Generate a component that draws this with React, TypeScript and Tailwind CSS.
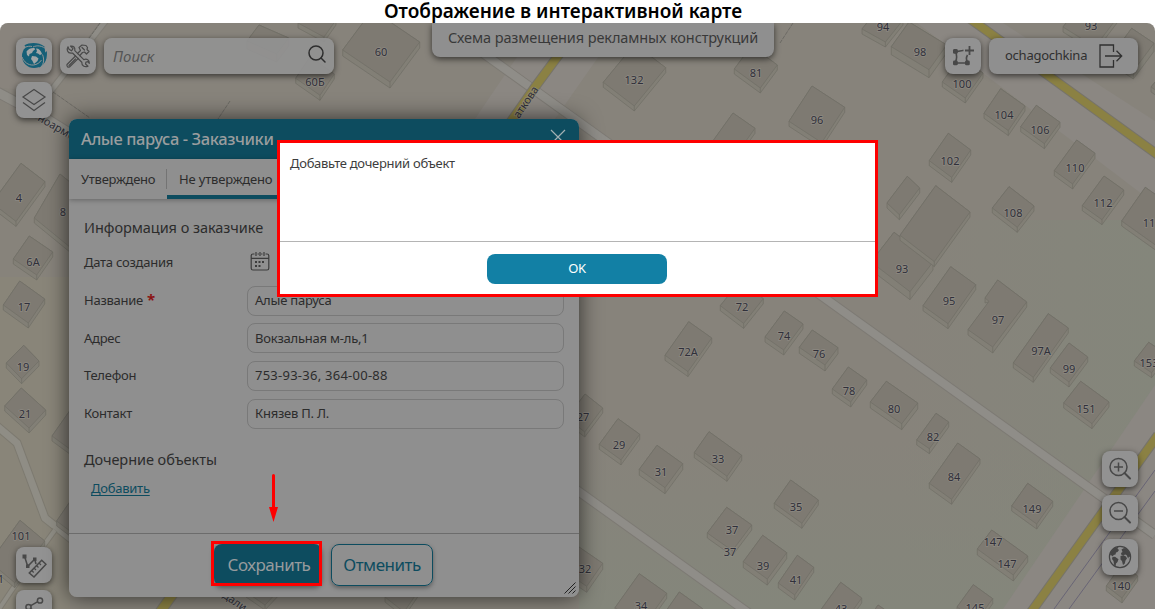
import type { ReactNode } from 'react'

type Point = [number, number]

interface Building {
  // left, top and right corner of the roof
  l: Point
  t: Point
  r: Point
  h?: number
}

interface MapLabel {
  x: number
  y: number
  text: string
}

const buildings: Building[] = [
  { l: [862, 29], t: [879.6, 7], r: [903, 20] },
  { l: [891.3, 46.7], t: [909, 22], r: [946.7, 45], h: 8 },
  { l: [942.3, 82], t: [960, 57], r: [983, 73] },
  { l: [984, 113.3], t: [1000.7, 88.7], r: [1025, 106] },
  { l: [1020.7, 126.7], t: [1036.3, 105.3], r: [1060, 122.3] },
  { l: [929.3, 160.7], t: [948.3, 133.3], r: [970.7, 150] },
  { l: [1054.3, 170.7], t: [1076.7, 140], r: [1095, 153.3] },
  { l: [1082.3, 205.7], t: [1104, 176], r: [1123.7, 190] },
  { l: [789, 121.3], t: [812, 86], r: [844.7, 107.3] },
  { l: [887, 203], t: [907.3, 176.3], r: [919.7, 188] },
  { l: [871, 262], t: [894, 232.3], r: [933, 262], h: 8 },
  { l: [900, 235.3], t: [935.7, 185.7], r: [970, 212] },
  { l: [992.3, 208], t: [1009, 186.7], r: [1034, 206] },
  { l: [1121.7, 221], t: [1145.3, 187.3], r: [1180, 212] },
  { l: [923, 305.7], t: [950.7, 266.7], r: [975.7, 284.7] },
  { l: [1013.3, 363], t: [1048.3, 313.7], r: [1068.3, 328] },
  { l: [1050.3, 368], t: [1069, 343], r: [1087.7, 357] },
  { l: [1134.3, 361], t: [1148.7, 342.3], r: [1166, 354] },
  { l: [1063.7, 403], t: [1080.7, 381.3], r: [1109, 402] },
  { l: [765, 337], t: [784.3, 311], r: [803, 324] },
  { l: [799.3, 347.3], t: [812.3, 330], r: [838, 347.7], h: 6 },
  { l: [832.3, 389], t: [848.3, 367], r: [866.7, 380] },
  { l: [870.3, 402], t: [886.3, 381.3], r: [917.7, 403], h: 6 },
  { l: [916.7, 440], t: [936, 413.3], r: [948.7, 422] },
  { l: [929.3, 483.3], t: [957.7, 443], r: [980, 459] },
  { l: [774.3, 503.3], t: [790.7, 480], r: [818.3, 500] },
  { l: [1011.7, 506], t: [1027.7, 483.3], r: [1052.7, 501.3] },
  { l: [977.3, 549], t: [991.7, 530], r: [1027.7, 556], h: 6 },
  { l: [957, 607], t: [973.3, 584.7], r: [992.7, 598.7] },
  { l: [820, 611], t: [840.7, 582.3], r: [861.7, 598] },
  { l: [868, 620], t: [878, 605], r: [900, 620] },
  { l: [778.3, 583], t: [797.3, 555.3], r: [813.7, 567.3] },
  { l: [743.3, 561.7], t: [762.7, 535.3], r: [786.7, 552.7], h: 6 },
  { l: [707.3, 533], t: [726.7, 507.3], r: [751.7, 525] },
  { l: [615, 607.7], t: [639.3, 573.7], r: [666.7, 593.3] },
  { l: [666, 611], t: [679.3, 592], r: [703, 609] },
  { l: [563, 570], t: [579, 547], r: [602.7, 563.3], h: 6 },
  { l: [567, 418], t: [585, 394], r: [602.7, 408] },
  { l: [599.3, 444.3], t: [618, 418.7], r: [639.7, 434.3] },
  { l: [639.3, 469.3], t: [657, 445.3], r: [682.7, 463.7], h: 6 },
  { l: [694.3, 452.7], t: [709, 431.7], r: [741.7, 455.3] },
  { l: [665, 355.3], t: [688.7, 321.7], r: [711.7, 338] },
  { l: [720.3, 305.7], t: [740, 281], r: [763.3, 298.7] },
  { l: [603.3, 82.3], t: [634.7, 44], r: [665.7, 67.7] },
  { l: [734.3, 69], t: [751.3, 46], r: [777.3, 65] },
  { l: [710, 145], t: [733, 113], r: [755, 128.3] },
  { l: [342.7, 50], t: [372.4, 10], r: [419.7, 42], h: 6 },
  { l: [295.7, 78.3], t: [310, 57], r: [334.3, 74] },
  { l: [247, 41], t: [259, 25], r: [288.7, 38], h: 8 },
  { l: [298, 23], t: [310, 6], r: [336, 20] },
  { l: [-8, 203], t: [21, 163.3], r: [45, 181.7] },
  { l: [34.3, 218], t: [60, 174], r: [98, 205] },
  { l: [13.3, 259], t: [29.3, 236], r: [52.7, 252] },
  { l: [3.3, 305], t: [19.7, 281], r: [44.7, 299] },
  { l: [6.3, 363], t: [23.7, 345.3], r: [39, 361] },
  { l: [4.7, 406], t: [21.3, 388], r: [45.7, 410] },
  { l: [52, 436], t: [78, 399], r: [104, 418] },
  { l: [56.7, 521], t: [80, 487], r: [104, 505] },
  { l: [-10, 562], t: [20, 520.3], r: [44.7, 541] },
  { l: [1106.3, 586], t: [1122, 564], r: [1137.7, 576] },
  { l: [1063, 27], t: [1085, -2], r: [1117, 18] },
  { l: [1111, 56], t: [1131.7, 28.3], r: [1154, 43.3], h: 8 },
  { l: [1151, 87], t: [1165, 70], r: [1180, 80] },
  { l: [385, 597], t: [400, 575], r: [419, 590] },
  { l: [246, 592], t: [262, 575], r: [281, 588] },
]

const labels: MapLabel[] = [
  { x: 883, y: 27, text: '94' },
  { x: 920, y: 52, text: '98' },
  { x: 962, y: 84, text: '100' },
  { x: 1004, y: 115, text: '104' },
  { x: 1040, y: 130, text: '106' },
  { x: 950, y: 161, text: '102' },
  { x: 1075, y: 168, text: '110' },
  { x: 1103, y: 203, text: '112' },
  { x: 817, y: 120, text: '96' },
  { x: 902, y: 269, text: '93' },
  { x: 1013, y: 213, text: '108' },
  { x: 1149, y: 223, text: '11' },
  { x: 949, y: 301, text: '95' },
  { x: 998, y: 320, text: '97' },
  { x: 1041, y: 351, text: '97А' },
  { x: 1069, y: 369, text: '99' },
  { x: 1149, y: 363, text: '153' },
  { x: 1086, y: 409, text: '151' },
  { x: 784, y: 336, text: '74' },
  { x: 819, y: 354, text: '76' },
  { x: 849, y: 391, text: '78' },
  { x: 894, y: 409, text: '80' },
  { x: 933, y: 437, text: '82' },
  { x: 954, y: 477, text: '84' },
  { x: 796, y: 507, text: '35' },
  { x: 1032, y: 509, text: '149' },
  { x: 993, y: 542, text: '147' },
  { x: 1007, y: 564, text: '147' },
  { x: 975, y: 608, text: '145' },
  { x: 841, y: 609, text: '43' },
  { x: 796, y: 580, text: '41' },
  { x: 763, y: 566, text: '39' },
  { x: 732, y: 530, text: '37' },
  { x: 730, y: 552, text: '37' },
  { x: 641, y: 606, text: '34' },
  { x: 585, y: 569, text: '32' },
  { x: 583, y: 417, text: '27' },
  { x: 619, y: 445, text: '29' },
  { x: 661, y: 472, text: '31' },
  { x: 718, y: 459, text: '33' },
  { x: 688, y: 352, text: '72А' },
  { x: 742, y: 307, text: '72' },
  { x: 634, y: 80, text: '132' },
  { x: 756, y: 73, text: '81' },
  { x: 381, y: 52, text: '60' },
  { x: 315, y: 82, text: '60Б' },
  { x: 19, y: 198, text: '4' },
  { x: 63, y: 212, text: '8' },
  { x: 33, y: 262, text: '6А' },
  { x: 24, y: 307, text: '17' },
  { x: 23, y: 367, text: '19' },
  { x: 25, y: 414, text: '21' },
  { x: 21, y: 536, text: '101' },
  { x: 1, y: 579, text: '1' },
  { x: 1121, y: 586, text: '140' },
  { x: 1091, y: 26, text: '93' },
]

const points = (list: Point[]) => list.map((p) => p.join(',')).join(' ')

function House({ l, t, r, h = 5 }: Building) {
  const b: Point = [l[0] + r[0] - t[0], l[1] + r[1] - t[1]]
  const down = (p: Point): Point => [p[0], p[1] + h]
  return (
    <g fill="#7e7a72" stroke="#706e66" strokeWidth="0.7">
      <polygon points={points([l, t, r, down(r), down(b), down(l)])} fill="#827f76" />
      <polygon points={points([l, t, r, b])} />
      <path d={`M${b[0]} ${b[1]}v${h}`} />
    </g>
  )
}

function Road({ d, color, width, edge }: { d: string; color: string; width: number; edge: string }) {
  return (
    <g fill="none">
      <path d={d} stroke={edge} strokeWidth={width + 2} />
      <path d={d} stroke={color} strokeWidth={width} />
    </g>
  )
}

function CityMap() {
  return (
    <svg className="absolute inset-0 h-[586px] w-[1155px]" viewBox="0 23 1155 586">
      <defs>
        <linearGradient id="east" x1="0" x2="1">
          <stop offset="0" stopColor="#84867b" stopOpacity="0" />
          <stop offset="1" stopColor="#84867b" />
        </linearGradient>
        <linearGradient id="south" x1="0" x2="0" y1="0" y2="1">
          <stop offset="0" stopColor="#84867b" stopOpacity="0" />
          <stop offset="1" stopColor="#84867b" />
        </linearGradient>
      </defs>
      <rect y="23" width="1155" height="586" fill="#87837b" />
      <rect x="900" y="220" width="255" height="389" fill="url(#east)" />
      <rect x="579" y="440" width="576" height="169" fill="url(#south)" />
      <rect y="277" width="70" height="332" fill="#8a8778" opacity="0.6" />

      {/* light strips along the main streets */}
      <g fill="#8b8782">
        <polygon points="917,23 1003,23 1155,121 1155,204" />
        <polygon points="1155,385 1155,609 1003,609" />
        <polygon points="540,23 622,23 555,119 500,200 420,200" />
        <polygon points="0,23 100,23 50,92 0,88" opacity="0.35" />
      </g>

      <Road d="M441 23L1155 535" color="#8f8d88" width={8} edge="#7d7a74" />
      <Road d="M560 478L750 614" color="#8f8d88" width={8} edge="#7d7a74" />
      <Road d="M107 19L50 92" color="#8f8d87" width={5} edge="#7f7c75" />
      <Road d="M-3 92L42 116L90 146" color="#8f8d87" width={9} edge="#7d7a74" />
      <Road d="M-3 426L17 443L45 518L80 546" color="#8f8d85" width={7} edge="#7d7a70" />
      <Road d="M-3 612L20 578L55 530" color="#8f8d85" width={4} edge="#7d7a70" />
      <Road d="M586 18L535 87L505 130" color="#8b8143" width={8} edge="#76736b" />
      <Road d="M180 584L158 615" color="#8b8143" width={9} edge="#76736b" />
      <Road d="M969 18L1158 155" color="#8b8143" width={8} edge="#76736b" />
      <Road d="M1158 435L1029 615" color="#8b8143" width={8} edge="#76736b" />

      <g fill="none" strokeWidth="0.8">
        <path d="M1155 470L1054 609M1155 491L1069 609" stroke="#5f5c72" />
        <path d="M100 23L72 62M53 92L90 118M230 101L218 119M793 23L780 43" stroke="#65635e" strokeDasharray="4 1" />
      </g>

      {buildings.map((b, i) => (
        <House key={i} {...b} />
      ))}
      <g fill="#7e7a72" stroke="#706e66" strokeWidth="0.7">
        <polygon points="997.7,280 1026.7,302 1026.7,307 992.7,353 968,335 968,329.7 989,302 985,303 985,298" fill="#827f76" />
        <polygon points="997.7,280 1026.7,302 992.7,347 968,329.7 989,301.3 985,298" />
        <path d="M992.7 347v6" />
      </g>

      <g
        className="font-['Noto_Sans'] text-[11px]"
        fill="#30303a"
        stroke="#96938c"
        strokeWidth="1.6"
        strokeOpacity="0.6"
        paintOrder="stroke"
        textAnchor="middle"
      >
        {labels.map((l) => (
          <text key={`${l.text}-${l.x}`} x={l.x} y={l.y + 4}>
            {l.text}
          </text>
        ))}
        <text transform="translate(37 120) rotate(30)" textAnchor="start">ноармейская</text>
        <text transform="translate(519 119) rotate(-56)" textAnchor="start">аткова</text>
        <text transform="translate(222 597) rotate(34)" textAnchor="start">дали</text>
      </g>
    </svg>
  )
}

function IconBox({ children }: { children: ReactNode }) {
  return (
    <button className="flex size-9 shrink-0 items-center justify-center rounded-lg bg-[#929292] shadow-[0_2px_6px_rgba(0,0,0,0.6)]">
      {children}
    </button>
  )
}

const LogoIcon = () => (
  <svg className="size-[28px]" viewBox="0 0 28 28">
    <circle cx="14" cy="14" r="12" fill="#155f77" />
    <path d="M4.500 3.200C10 0 19 0 24.500 4.500L25 9 16 6 7 7.500z" fill="#155f77" />
    <path d="M26.800 9c.7 6.500-1 13-7.500 16.500L17 22l5-8z" fill="#155f77" />
    {/* gaps between the three blades */}
    <path d="M1 9.500C3 5.500 7.500 3.500 12 4.500M27 7.500C22 3.500 17 3 13 5M19.500 27C23 23.500 25 19 22.500 12.500M2 15c2 5 6 8.500 11.500 8 3.500-.5 6-2 8-5" fill="none" stroke="#909495" strokeWidth="1" />
    <g fill="#a0a5a6">
      <path d="M6.500 9.500C8.500 6.500 12 5.500 14.500 6l.5 1.500-2 1.500-1 2-2.500 1-.5 2.500-2-1.500z" />
      <path d="M16 6.500c3 0 5 2 6 5.500l-2 1-2-1.500-2-.5 1-2z" />
      <path d="M12 14l4 .5 2.500 2-1 2.500-3.500 3-1.500-3-1.500-2z" />
    </g>
  </svg>
)

const ToolsIcon = () => (
  <svg className="size-[26px]" viewBox="0 0 26 26" fill="none" stroke="#4a4a4a" strokeWidth="1.2" strokeLinejoin="round" strokeLinecap="round">
    <path d="M5.500 3.200L8 5.700 6.500 7.800 4 6.200 3 3.800C1.300 6.500 2.500 10 5.800 10.200L7.500 10 16.800 19.200C16.600 22.500 19.500 24.600 23 23.200L20.500 21 21 19 23 18.600 24.300 20.300C24.500 17 21.800 15.400 18.800 16.700L9.800 7.700C10.300 4.500 8.500 2.500 5.500 3.200z" />
    <path d="M12.500 10.500L15.500 7.500 14 4.500 17 2 21 2.500 22.500 4.500 22 6.500 24 8.500 21.500 11 19.500 9 17.500 9.500 14.800 12.500M10.500 13L2 21.500C1.500 23.500 3 24.500 4.500 24L13.300 15.400" />
    <path d="M17 4.500l2.500 2.500M4 22.500l6.500-6.500" />
  </svg>
)

const SearchIcon = () => (
  <svg className="mb-1 size-[20px]" viewBox="0 0 20 20" fill="none" stroke="#2e2e2e" strokeWidth="1.5">
    <circle cx="9" cy="9" r="7" />
    <path d="M14 14l4 4" strokeLinecap="round" />
  </svg>
)

const LayersIcon = () => (
  <svg className="size-[26px]" viewBox="0 0 26 26" fill="none" stroke="#484848" strokeWidth="1.2">
    <path d="M13 2.500L24 10 13 17.500 2 10z" />
    <path d="M2 15.500L13 23.500 24 15.500" />
  </svg>
)

const ShapePlusIcon = () => (
  <svg className="size-[24px]" viewBox="0 0 24 24" fill="none" stroke="#484848">
    <path d="M4.500 7.500C6 11 6 14.500 4.500 18M5 19h11.500M17 18.500C15 16 15 13.500 16.500 11M4.500 7C7.500 8.500 9.500 6 12.500 6.500" strokeWidth="1.600" />
    <path d="M18.500 2v9M14 6.500h9" strokeWidth="1.800" />
    <g fill="#484848" stroke="none">
      <rect x="2" y="5" width="4.800" height="4.800" rx="1.400" />
      <rect x="2" y="16.500" width="4.800" height="4.800" rx="1.400" />
      <rect x="14" y="16.500" width="4.800" height="4.800" rx="1.400" />
    </g>
  </svg>
)

const LogoutIcon = () => (
  <svg className="h-[24px] w-[24px]" viewBox="0 0 24 24" fill="none" stroke="#303030" strokeWidth="1.3">
    <path d="M14.500 8V1H1v22h13.500v-7" />
    <path d="M6 12h16.500M17.500 6.800L22.700 12l-5.200 5.200" />
  </svg>
)

const RulerIcon = () => (
  <svg className="size-[26px]" viewBox="0 0 26 26" fill="none" stroke="#484848" strokeWidth="1.5">
    <path d="M3.500 4.300L6.700 14.300 13.700 7.300 15 12" />
    <path d="M20.700 8.300L25 12.300 13 25 8.300 21z" />
    <path d="M18 11l2 2M15.500 13.500l2 2M13 16l2 2M10.700 18.500l2 2" strokeWidth="1.2" />
    <g fill="#484848" stroke="none">
      <rect x="1.500" y="2.500" width="4" height="4" />
      <rect x="5" y="12.500" width="3.500" height="3.500" />
      <rect x="12" y="5.500" width="3.500" height="3.500" />
    </g>
  </svg>
)

const PathIcon = () => (
  <svg className="size-[26px]" viewBox="0 0 26 26" fill="none" stroke="#484848" strokeWidth="1.5">
    <circle cx="19" cy="5.500" r="2.600" />
    <circle cx="7.500" cy="12" r="2.600" />
    <path d="M9.800 10.700l7-4M9.500 13.500l8 5" />
    <circle cx="19.500" cy="20" r="2.600" />
  </svg>
)

const ZoomIcon = ({ plus }: { plus?: boolean }) => (
  <svg className="size-[24px]" viewBox="0 0 24 24" fill="none" stroke="#484848" strokeWidth="1.5">
    <circle cx="10.500" cy="10" r="8.500" />
    <path d={plus ? 'M6 10h9M10.500 5.500v9' : 'M6 10h9'} />
    <path d="M16.500 16l5.500 5.500" strokeWidth="2" strokeLinecap="round" />
  </svg>
)

const GlobeIcon = () => (
  <svg className="size-[24px]" viewBox="0 0 24 24">
    <circle cx="12" cy="12" r="10.600" fill="#8f8f8f" stroke="#444" strokeWidth="1.200" />
    <g fill="#444">
      <path d="M2.500 7.500L6 3 10.500 1.800 9.500 3.500 11 5 9.500 7 8 7.500 7.500 9.500 5.500 10 5 11.500 2 9.500z" />
      <path d="M4.500 12L7 11.800 10.500 14.300 9.500 17 8 18.500 7.500 21.500 6 19.500 5.500 16 4 14z" />
      <path d="M13.500 4.500L16 3l3.500 1.500 2.500 4 .5 4-1.500-1-.8 2-1.700-3.500-1.500-.5-1.500 1-2-.5-.5-2 1.500-1z" />
      <path d="M12.500 11l3-.8 2.500 1.300 1 2-1.500 2-.7 3-1.800 1.500-1-4-1.500-1.500z" />
    </g>
  </svg>
)

const CalendarIcon = () => (
  <svg className="mb-1 size-[20px]" viewBox="0 0 20 20" fill="none" stroke="#3c3c3c" strokeWidth="1.2">
    <path d="M4.500 3H3a1.800 1.800 0 0 0-1.800 1.800v12.400A1.800 1.800 0 0 0 3 19h14a1.800 1.800 0 0 0 1.800-1.800V4.800A1.800 1.800 0 0 0 17 3h-1.500M7.500 3H9M11 3h1.500M1.500 7.300h17" />
    <path d="M6 1v4M10 1v4M14 1v4" />
    <path d="M8.500 11h2M12 11h2M5 11h2M5 15h2M8.500 15h2" strokeWidth="2" />
  </svg>
)

const fields = [
  { label: 'Название', value: 'Алые паруса', required: true },
  { label: 'Адрес', value: 'Вокзальная м-ль,1' },
  { label: 'Телефон', value: '753-93-36, 364-00-88', wide: true },
  { label: 'Контакт', value: 'Князев П. Л.' },
]

function CustomerPanel() {
  return (
    <section className="absolute left-[69px] top-[96px] flex h-[478px] w-[510px] flex-col overflow-hidden rounded-lg bg-[#8f8f8f] text-[13px] tracking-[-0.25px] text-[#2c2c2c]">
      <header className="flex h-10 shrink-0 items-center justify-between bg-[#0d4c5f] pl-3 pr-[13px]">
        <h2 className="text-[16.5px] font-medium tracking-[-0.4px] text-[#9a9d9e]">Алые паруса - Заказчики</h2>
        <svg className="mb-1 size-4" viewBox="0 0 16 16" stroke="#a3b0b4" strokeWidth="1.200">
          <path d="M1 1l14 14M15 1L1 15" />
        </svg>
      </header>
      <nav className="flex h-10 shrink-0 shadow-[0_1px_5px_rgba(0,0,0,0.3)]">
        <span className="flex w-[98px] items-center pl-3 pt-0.5">Утверждено</span>
        <span className="relative flex w-[118px] items-center border-b-4 border-[#0d4c5f] pl-3 pt-1.5 tracking-[-0.17px]">
          <i className="absolute -left-px top-2.5 h-5 w-px bg-[#747474]" />
          Не утверждено
        </span>
      </nav>
      <div className="flex grow flex-col pl-[15px] pr-[15px] pt-[17px]">
        <h3 className="h-[22px] text-[14.5px] leading-[22px] tracking-[-0.05px]">Информация о заказчике</h3>
        <div className="mt-[6px] flex h-[38px] items-center">
          <span className="w-[166px]">Дата создания</span>
          <CalendarIcon />
        </div>
        {fields.map((f) => (
          <div key={f.label} className="flex h-[37.6px] items-center">
            <span className="w-[163px]">
              {f.label}
              {f.required && <b className="ml-1 text-[15px] leading-none text-[#8a1414]">*</b>}
            </span>
            <span
              className={`flex h-[30px] flex-1 items-center rounded-lg border border-[#797979] pl-[7px] ${f.wide ? 'tracking-[0.25px]' : 'tracking-[-0.22px]'}`}
            >
              {f.value}
            </span>
          </div>
        ))}
        <h3 className="mt-[16px] h-[22px] text-[14.5px] leading-[22px] tracking-[-0.05px]">Дочерние объекты</h3>
        <a className="ml-[7px] mt-[9px] text-[#0d4c5f] underline underline-offset-2">Добавить</a>
      </div>
      <footer className="relative flex h-16 shrink-0 gap-[9px] border-t border-[#6c6c6c] pl-[145px] pt-[10px] text-[17px] tracking-[-0.5px]">
        <button className="h-[42px] w-[108px] rounded-lg bg-[#0d4c5f] pl-0.5 text-[#969b9d] shadow-[0_2px_5px_rgba(0,0,0,0.4)]">Сохранить</button>
        <button className="h-[42px] w-[102px] rounded-lg border border-[#0d4c5f] text-[#0d4c5f] shadow-[0_2px_4px_rgba(0,0,0,0.35)]">Отменить</button>
        <svg className="absolute bottom-[3px] right-[3px] size-3" viewBox="0 0 12 12" stroke="#222" strokeWidth="1">
          <path d="M0.500 11.500l11-11M4.500 11.500l7-7M8.500 11.500l3-3" />
        </svg>
      </footer>
    </section>
  )
}

function AlertDialog() {
  return (
    <div className="absolute left-[277px] top-[117px] flex h-[157px] w-[601px] flex-col border-[3px] border-[#fe0000] bg-white">
      <p className="h-[98px] pl-[10px] pt-[11px] text-[13px] leading-[18px] tracking-[-0.28px] text-[#3d3d3d]">Добавьте дочерний объект</p>
      <div className="flex grow justify-center border-t border-[#b4b4b4] pr-px pt-3">
        <button className="h-[30px] w-[180px] rounded-lg bg-[#1280a5] text-[13px] tracking-[-0.3px] text-white">OK</button>
      </div>
    </div>
  )
}

export default function App() {
  return (
    <div className="flex h-[609px] w-[1156px] flex-col overflow-hidden bg-white font-['Noto_Sans',sans-serif]">
      <h1 className="h-[23px] w-[1126px] text-center text-[19px] font-semibold leading-[23px] text-black">
        Отображение в интерактивной карте
      </h1>
      <main className="relative h-[586px] w-[1155px] overflow-hidden rounded-t-lg">
        <CityMap />

        <div className="absolute left-4 top-[15px] flex flex-col gap-2">
          <div className="flex gap-2">
            <IconBox><LogoIcon /></IconBox>
            <IconBox><ToolsIcon /></IconBox>
            <div className="flex h-9 w-[230px] items-center justify-between rounded-lg bg-[#929292]/90 pl-[9px] pr-[7px] shadow-[0_2px_6px_rgba(0,0,0,0.6)]">
              <span className="text-[15px] italic text-[#555]">Поиск</span>
              <SearchIcon />
            </div>
          </div>
          <IconBox><LayersIcon /></IconBox>
        </div>

        <div className="absolute left-[432px] top-0 flex h-[34px] w-[342px] justify-center rounded-b-lg bg-[#8f8f8f] pt-[3px] text-[14.5px] leading-[22px] tracking-[-0.1px] text-[#393939] shadow-[0_2px_6px_rgba(0,0,0,0.6)]">
          Схема размещения рекламных конструкций
        </div>

        <div className="absolute right-[17px] top-[15px] flex gap-2">
          <IconBox><ShapePlusIcon /></IconBox>
          <div className="flex h-9 w-[149px] items-center justify-between rounded-lg bg-[#8f8f8f] pl-4 pr-[15px] text-[13px] tracking-[-0.25px] text-[#303030] shadow-[0_2px_6px_rgba(0,0,0,0.6)]">
            ochagochkina
            <LogoutIcon />
          </div>
        </div>

        <div className="absolute left-4 top-[524px] flex flex-col gap-[7px]">
          <IconBox><RulerIcon /></IconBox>
          <IconBox><PathIcon /></IconBox>
        </div>

        <div className="absolute right-[17px] top-[428px] flex flex-col gap-2">
          <IconBox><ZoomIcon plus /></IconBox>
          <IconBox><ZoomIcon /></IconBox>
          <IconBox><GlobeIcon /></IconBox>
        </div>

        <div className="absolute left-[69px] top-[96px] h-[478px] w-[510px] rounded-lg shadow-[0_0_22px_rgba(0,0,0,0.65)]" />
        <CustomerPanel />

        {/* red marks: frame round the save button and the arrow */}
        <div className="absolute left-[211px] top-[518px] h-[45px] w-[111px] border-[3px] border-[#fe0000]" />
        <svg className="absolute left-[269px] top-[451px] h-[48px] w-[9px]" viewBox="0 0 9 48" fill="#fe0000">
          <path d="M3 1.500a1.500 1.500 0 0 1 3 0V33h3L4.500 48 0 33h3z" />
        </svg>

        <AlertDialog />
      </main>
    </div>
  )
}
